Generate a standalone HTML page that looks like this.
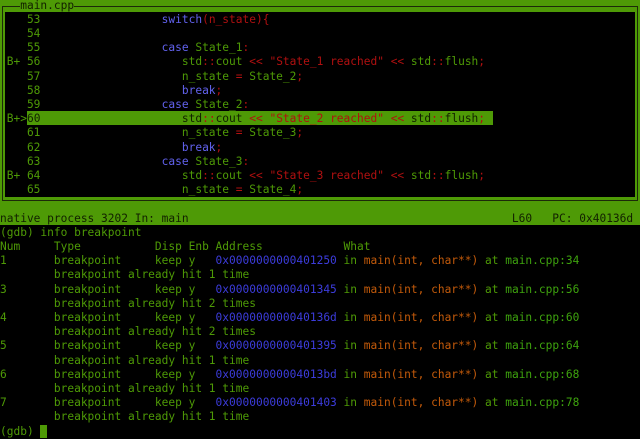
<!DOCTYPE html>
<html><head><meta charset="utf-8"><style>
html,body{margin:0;padding:0;background:#000;width:640px;height:439px;overflow:hidden}
body{position:relative;font-family:"DejaVu Sans Mono","Liberation Mono",monospace;font-size:11.2px}
.top{position:absolute;left:0;top:0;width:640px;height:225px;background:#4e9a06}
.ol{position:absolute;left:2px;top:6px;width:634px;height:193px;border:1px solid #1c2a08}
.in{position:absolute;left:5px;top:12px;width:630px;height:185px;background:#000}
.hl{position:absolute;left:27px;top:111px;width:466px;height:14.2px;background:#4e9a06}
pre{position:absolute;left:0;top:-1.5px;margin:0;font:inherit;line-height:14.2px;color:#4e9a06;white-space:pre}
.b{color:#6262ee}.r{color:#b01010}.k{color:#122000}.o{color:#c35a0a}.a{color:#3c3cdc}.g{color:#3ea30e}
.t{background:#4e9a06;color:#122000}
.cur{background:#4e9a06}
</style></head><body>
<div class="top"></div><div class="ol"></div><div class="in"></div><div class="hl"></div>
<pre>   <span class="t">main.cpp</span>
    53                  <span class="b">switch</span><span class="r">(n_state){</span>
    54
    55                  <span class="b">case</span> State_1<span class="r">:</span>
 B+ 56                     std<span class="r">::</span>cout <span class="r">&lt;&lt; "State_1 reached" &lt;&lt;</span> std<span class="r">::</span>flush<span class="r">;</span>
    57                     n_state <span class="r">=</span> State_2<span class="r">;</span>
    58                     <span class="b">break</span><span class="r">;</span>
    59                  <span class="b">case</span> State_2<span class="r">:</span>
 B+&gt;<span class="k">60                     std<span class="r">::</span>cout <span class="r">&lt;&lt; "State_2 reached" &lt;&lt;</span> std<span class="r">::</span>flush<span class="r">;</span></span>
    61                     n_state <span class="r">=</span> State_3<span class="r">;</span>
    62                     <span class="b">break</span><span class="r">;</span>
    63                  <span class="b">case</span> State_3<span class="r">:</span>
 B+ 64                     std<span class="r">::</span>cout <span class="r">&lt;&lt; "State_3 reached" &lt;&lt;</span> std<span class="r">::</span>flush<span class="r">;</span>
    65                     n_state <span class="r">=</span> State_4<span class="r">;</span>

<span class="k">native process 3202 In: main                                                L60   PC: 0x40136d</span>
(gdb) info breakpoint
Num     Type           Disp Enb Address            What
1       breakpoint     keep y   <span class="a">0x0000000000401250</span> in <span class="o">main(int, char**)</span> at <span class="g">main.cpp:34</span>
        breakpoint already hit 1 time
3       breakpoint     keep y   <span class="a">0x0000000000401345</span> in <span class="o">main(int, char**)</span> at <span class="g">main.cpp:56</span>
        breakpoint already hit 2 times
4       breakpoint     keep y   <span class="a">0x000000000040136d</span> in <span class="o">main(int, char**)</span> at <span class="g">main.cpp:60</span>
        breakpoint already hit 2 times
5       breakpoint     keep y   <span class="a">0x0000000000401395</span> in <span class="o">main(int, char**)</span> at <span class="g">main.cpp:64</span>
        breakpoint already hit 1 time
6       breakpoint     keep y   <span class="a">0x00000000004013bd</span> in <span class="o">main(int, char**)</span> at <span class="g">main.cpp:68</span>
        breakpoint already hit 1 time
7       breakpoint     keep y   <span class="a">0x0000000000401403</span> in <span class="o">main(int, char**)</span> at <span class="g">main.cpp:78</span>
        breakpoint already hit 1 time
(gdb) <span class="cur"> </span></pre>
</body></html>
